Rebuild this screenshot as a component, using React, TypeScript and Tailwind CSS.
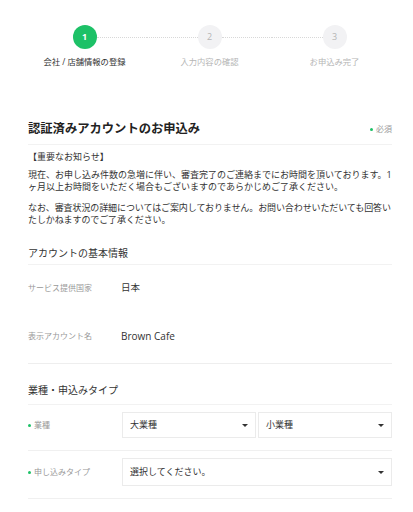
import React from 'react'

const steps = [
  { no: 1, label: '会社 / 店舗情報の登録', active: true },
  { no: 2, label: '入力内容の確認', active: false },
  { no: 3, label: 'お申込み完了', active: false }
]

const Dot = () => <span className="inline-block w-[3px] h-[3px] rounded-full bg-[#1dc167] mr-[3px]" />

const SelectBox = ({ text, className }: { text: string; className?: string }) => (
  <div className={`flex items-center justify-between border border-[#ebebeb] bg-white pl-[7px] pr-[7px] ${className}`}>
    <span className="text-[9px] text-[#333]">{text}</span>
    <span className="w-0 h-0 border-l-[3px] border-r-[3px] border-t-[3px] border-l-transparent border-r-transparent border-t-[#333]" />
  </div>
)

const App: React.FC = () => {
  return (
    <div
      className="w-[413px] h-[512px] bg-white overflow-hidden text-[#333]"
      style={{ fontFamily: '"Open Sans", "Noto Sans CJK JP", sans-serif' }}
    >
      {/* Steps */}
      <div className="grid grid-cols-3 ml-[22px] w-[375px] pt-[25px]">
        {steps.map((s, i) => (
          <div key={s.no} className="flex flex-col items-center">
            <div className="flex items-center w-full">
              <div className={`flex-1 border-t border-dotted ${i === 0 ? 'border-transparent' : 'border-[#d8d8d8]'}`} />
              <div
                className={`w-6 h-6 rounded-full flex items-center justify-center text-[9px] ${
                  s.active ? 'bg-[#1dc167] text-white font-bold' : 'bg-[#f2f2f4] text-[#b5b5b5]'
                }`}
              >
                {s.no}
              </div>
              <div className={`flex-1 border-t border-dotted ${i === 2 ? 'border-transparent' : 'border-[#d8d8d8]'}`} />
            </div>
            <div className={`mt-[7px] text-[8.3px] leading-[12px] ${s.active ? 'text-[#333]' : 'text-[#b5b5b5]'}`}>
              {s.label}
            </div>
          </div>
        ))}
      </div>

      {/* Form */}
      <div className="ml-[28px] w-[364px]">
        <div className="mt-[51px] flex items-center justify-between h-[20px]">
          <h1 className="text-[12.3px] font-bold leading-[20px] text-[#222]">認証済みアカウントのお申込み</h1>
          <span className="flex items-center text-[8px] text-[#999]">
            <Dot />
            必須
          </span>
        </div>
        <div className="mt-[5px] border-b border-[#f2f2f2]" />

        <p className="mt-[5px] text-[9px] leading-[14px]">【重要なお知らせ】</p>
        <p className="mt-[5px] text-[9px] leading-[12px] whitespace-nowrap">
          現在、お申し込み件数の急増に伴い、審査完了のご連絡までにお時間を頂いております。1
          <br />
          ヶ月以上お時間をいただく場合もございますのであらかじめご了承ください。
        </p>
        <p className="mt-[9px] text-[9px] leading-[12px] whitespace-nowrap tracking-[-0.1px]">
          なお、審査状況の詳細についてはご案内しておりません。お問い合わせいただいても回答い
          <br />
          たしかねますのでご了承ください。
        </p>

        {/* Basic info */}
        <h2 className="mt-[20px] text-[10px] leading-[14px] pb-[4px] border-b border-[#f2f2f2]">アカウントの基本情報</h2>
        <div className="border-b border-[#eeeeee] pb-[2px]">
          <div className="flex items-center h-[46px]">
            <span className="w-[93px] text-[8px] text-[#999]">サービス提供国家</span>
            <span className="text-[9.5px]">日本</span>
          </div>
          <div className="flex items-center h-[50px]">
            <span className="w-[93px] text-[8px] text-[#999]">表示アカウント名</span>
            <span className="text-[10px]">Brown Cafe</span>
          </div>
        </div>

        {/* Business type */}
        <h2 className="mt-[19px] text-[10px] leading-[14px] pb-[7px] border-b border-[#f2f2f2]">業種・申込みタイプ</h2>
        <div className="flex items-center pt-[7px] pb-[12px] border-b border-[#f0f0f0]">
          <span className="w-[94px] flex items-center text-[8px] text-[#999]">
            <Dot />
            業種
          </span>
          <div className="flex-1 flex gap-[2px]">
            <SelectBox text="大業種" className="flex-1 h-[26px]" />
            <SelectBox text="小業種" className="flex-1 h-[26px]" />
          </div>
        </div>
        <div className="flex items-center pt-[7px] pb-[12px] border-b border-[#f0f0f0]">
          <span className="w-[94px] flex items-center text-[8px] text-[#999]">
            <Dot />
            申し込みタイプ
          </span>
          <SelectBox text="選択してください。" className="flex-1 h-[28px]" />
        </div>
      </div>
    </div>
  )
}

export default App
